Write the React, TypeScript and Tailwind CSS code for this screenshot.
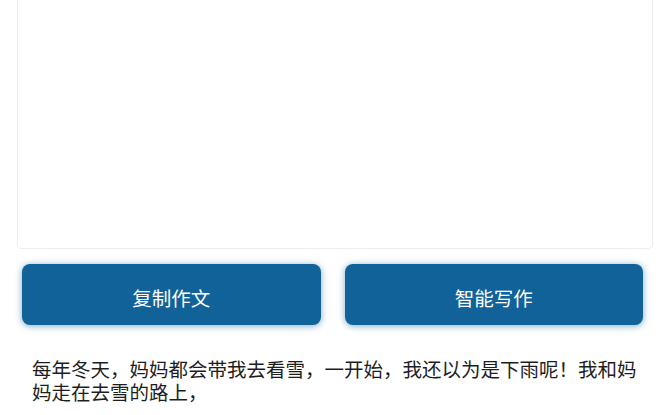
import React from "react";

export default function App() {
  const font = { fontFamily: '"Noto Sans CJK SC", "Noto Sans", sans-serif' };
  return (
    <div className="w-[670px] h-[415px] overflow-hidden bg-white" style={font}>
      <div className="pl-[17px] pr-[17px]">
        <div className="h-[249px] border border-t-0 border-[#ececec] rounded-b-[5px] bg-white" />
      </div>
      <div className="flex gap-[24px] pl-[22px] pr-[27px] mt-[15px]">
        <button className="flex-1 h-[61px] rounded-[8px] bg-[#12629a] text-white text-[19.5px] leading-none pt-[6px] shadow-[0_1px_7px_rgba(18,98,154,0.55)]">
          复制作文
        </button>
        <button className="flex-1 h-[61px] rounded-[8px] bg-[#12629a] text-white text-[19.5px] leading-none pt-[6px] shadow-[0_1px_7px_rgba(18,98,154,0.55)]">
          智能写作
        </button>
      </div>
      <p className="pl-[32px] pr-[30px] mt-[33px] text-[19.5px] leading-[22.5px] text-[#1e1e1e]">
        每年冬天，妈妈都会带我去看雪，一开始，我还以为是下雨呢！我和妈妈走在去雪的路上，
      </p>
    </div>
  );
}
